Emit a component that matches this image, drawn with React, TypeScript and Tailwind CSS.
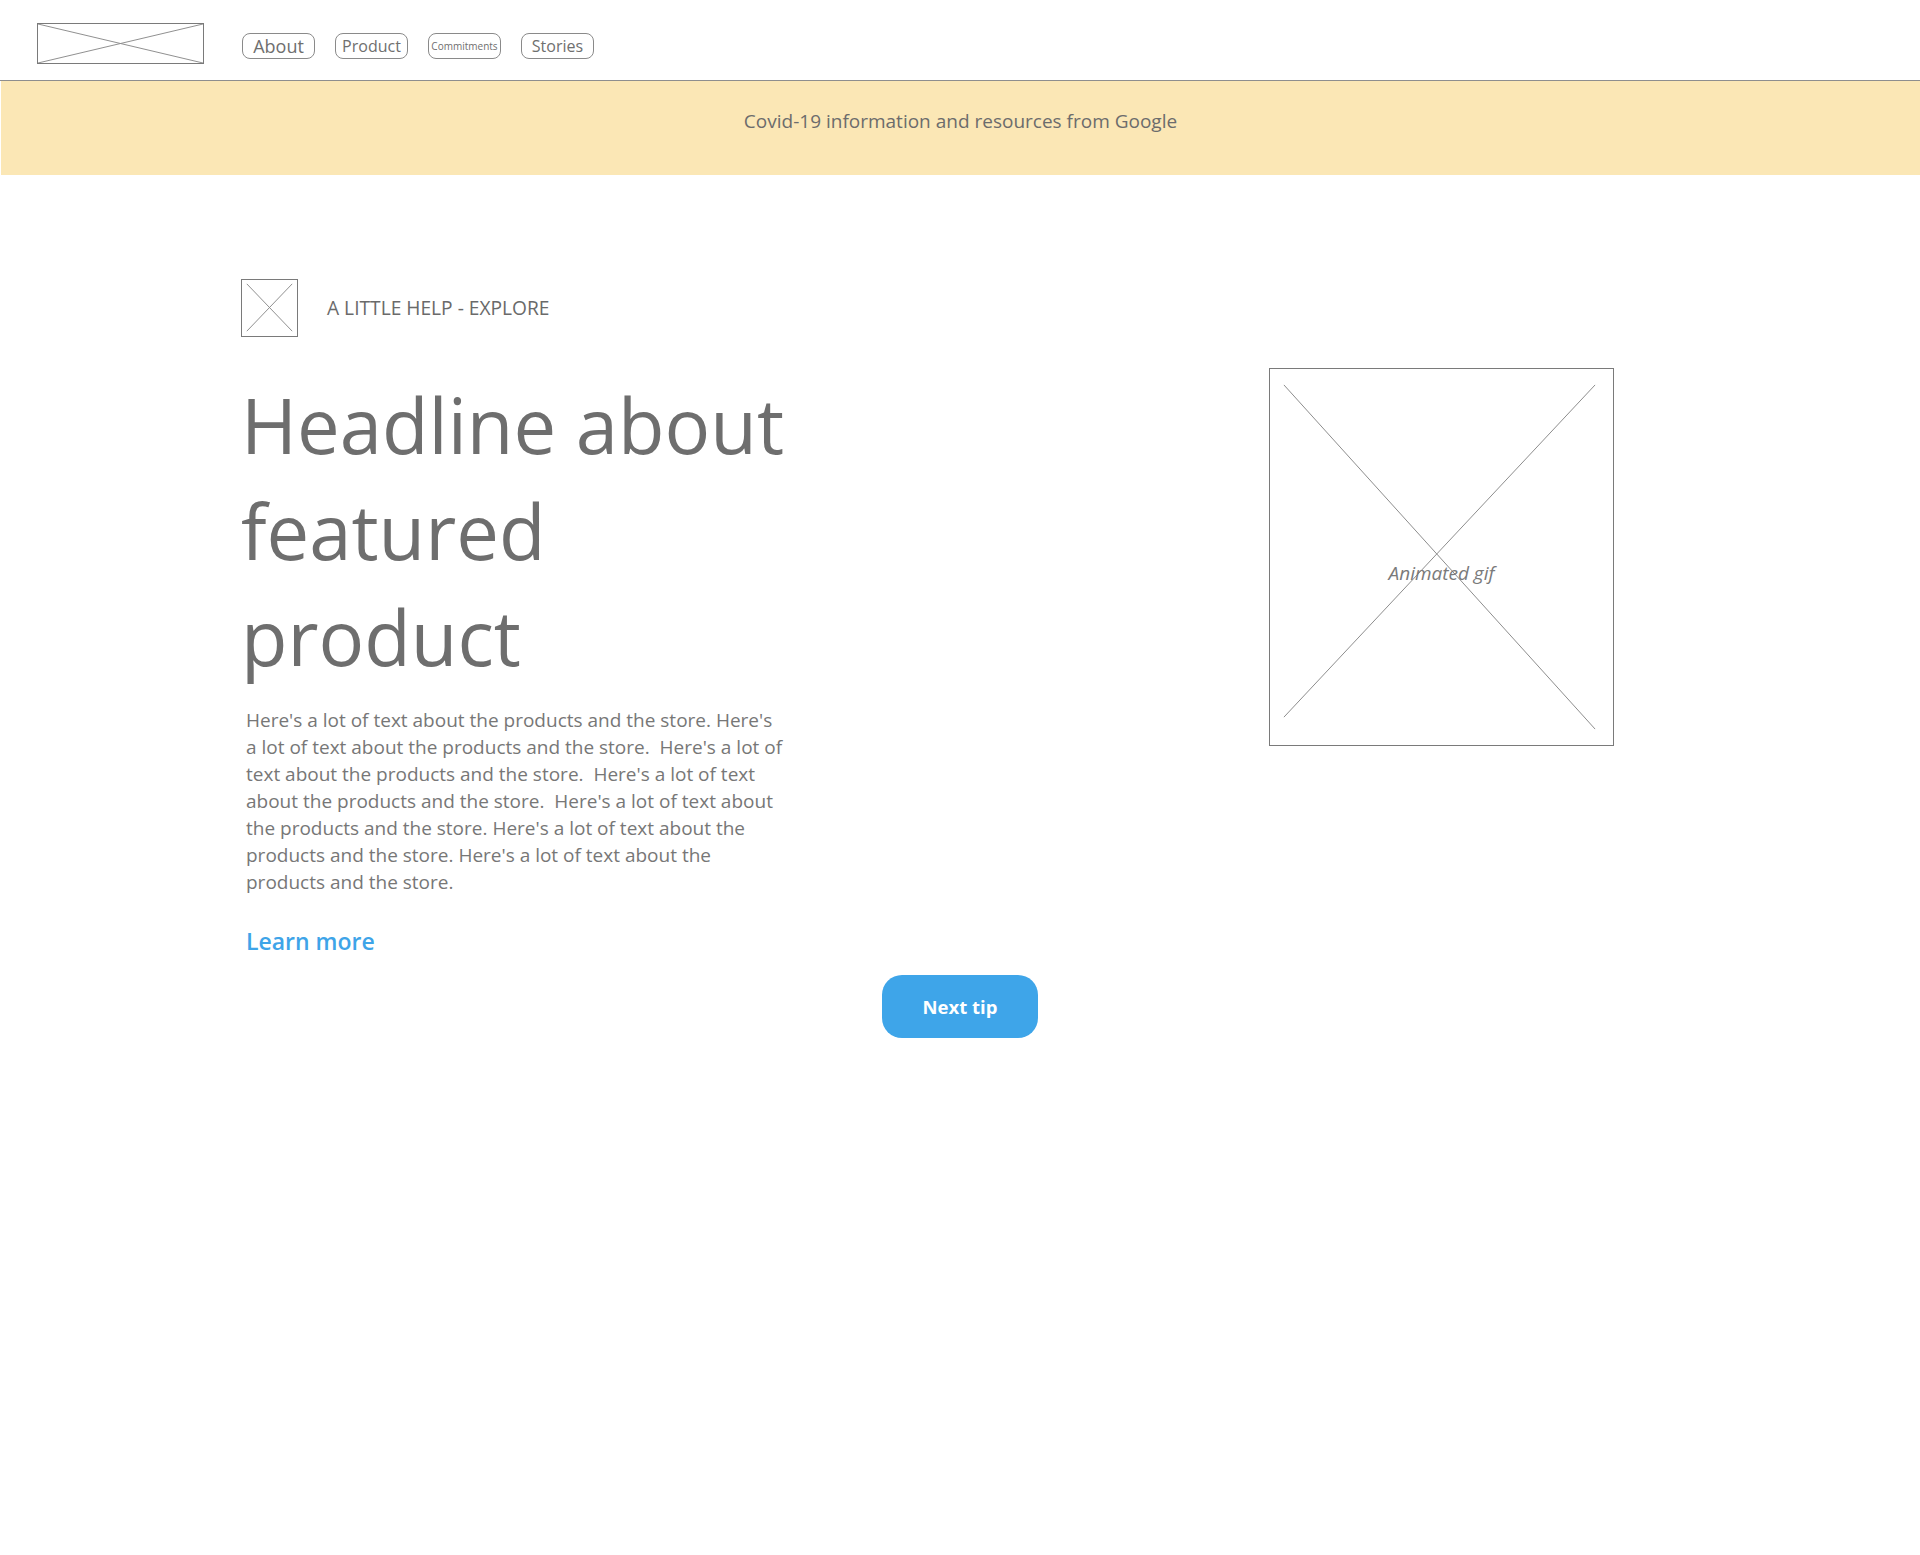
import type { ReactNode } from "react";

const navItems = [
  { label: "About", size: "text-[18px]" },
  { label: "Product", size: "text-[16px]" },
  { label: "Commitments", size: "text-[10px]" },
  { label: "Stories", size: "text-[16px]" },
];

const paragraphLines = [
  "Here's a lot of text about the products and the store. Here's",
  "a lot of text about the products and the store.  Here's a lot of",
  "text about the products and the store.  Here's a lot of text",
  "about the products and the store.  Here's a lot of text about",
  "the products and the store. Here's a lot of text about the",
  "products and the store. Here's a lot of text about the",
  "products and the store.",
];

// wireframe placeholder: box with a cross
function Placeholder({
  className,
  w,
  h,
  lines,
  children,
}: {
  className: string;
  w: number;
  h: number;
  lines: [number, number, number, number][];
  children?: ReactNode;
}) {
  return (
    <div className={`relative shrink-0 ${className}`}>
      <svg
        className="absolute inset-0 h-full w-full"
        viewBox={`0 0 ${w} ${h}`}
        preserveAspectRatio="none"
      >
        {lines.map(([x1, y1, x2, y2], i) => (
          <line key={i} x1={x1} y1={y1} x2={x2} y2={y2} stroke="#8c8c8c" strokeWidth="1" />
        ))}
      </svg>
      {children}
    </div>
  );
}

export default function App() {
  return (
    <div className="min-h-[1555px] w-full bg-white font-['Open_Sans',sans-serif] text-[#707070]">
      {/* Header */}
      <header className="flex h-[81px] items-start border-b border-[#8e8e8e] pl-[37px]">
        <Placeholder
          className="mt-[23px] h-[41px] w-[167px] border border-[#7a7a7a]"
          w={167}
          h={41}
          lines={[
            [0, 0, 167, 41],
            [0, 41, 167, 0],
          ]}
        />
        <nav className="ml-[38px] mt-[33px] flex gap-[20px]">
          {navItems.map((item) => (
            <span
              key={item.label}
              className={`flex h-[26px] w-[73px] items-center justify-center rounded-[8px] border border-[#8a8a8a] leading-none text-[#6f6f6f] ${item.size}`}
            >
              {item.label}
            </span>
          ))}
        </nav>
      </header>

      {/* Covid banner */}
      <div className="ml-[1px] flex h-[94px] items-center justify-center bg-[#fbe7b5] pb-[13px] text-[19px] text-[#6c6c6c]">
        Covid-19 information and resources from Google
      </div>

      {/* Featured tip */}
      <section className="flex justify-between pl-[241px] pr-[306px] pt-[104px]">
        <div className="flex w-[580px] flex-col">
          <div className="flex items-center">
            <Placeholder
              className="h-[58px] w-[57px] border border-[#7a7a7a]"
              w={57}
              h={58}
              lines={[
                [5, 4, 52, 53],
                [52, 4, 5, 53],
              ]}
            />
            <span className="ml-[29px] text-[19.2px] text-[#6a6a6a]">A LITTLE HELP - EXPLORE</span>
          </div>

          <h1 className="mt-[35px] text-[76px] font-normal leading-[106px] text-[#6e6e6e]">
            Headline about
            <br />
            featured
            <br />
            product
          </h1>

          <p className="mt-[17px] pl-[5px] text-[19px] leading-[27px] text-[#777777]">
            {paragraphLines.map((line, i) => (
              <span key={i} className="block whitespace-pre">
                {line}
              </span>
            ))}
          </p>

          <a className="mt-[29px] pl-[5px] text-[23px] font-semibold leading-[32px] text-[#3ea4e8]">
            Learn more
          </a>
        </div>

        <Placeholder
          className="mt-[89px] flex h-[378px] w-[345px] items-center justify-center border border-[#7a7a7a] pt-[32px]"
          w={345}
          h={378}
          lines={[
            [14, 16, 327, 362],
            [327, 16, 14, 350],
          ]}
        >
          <span className="relative text-[19px] italic text-[#7a7a7a]">Animated gif</span>
        </Placeholder>
      </section>

      <div className="mt-[18px] flex justify-center">
        <button className="h-[63px] w-[156px] rounded-[20px] bg-[#3ea5e9] text-[18.5px] font-bold text-white">
          Next tip
        </button>
      </div>
    </div>
  );
}
